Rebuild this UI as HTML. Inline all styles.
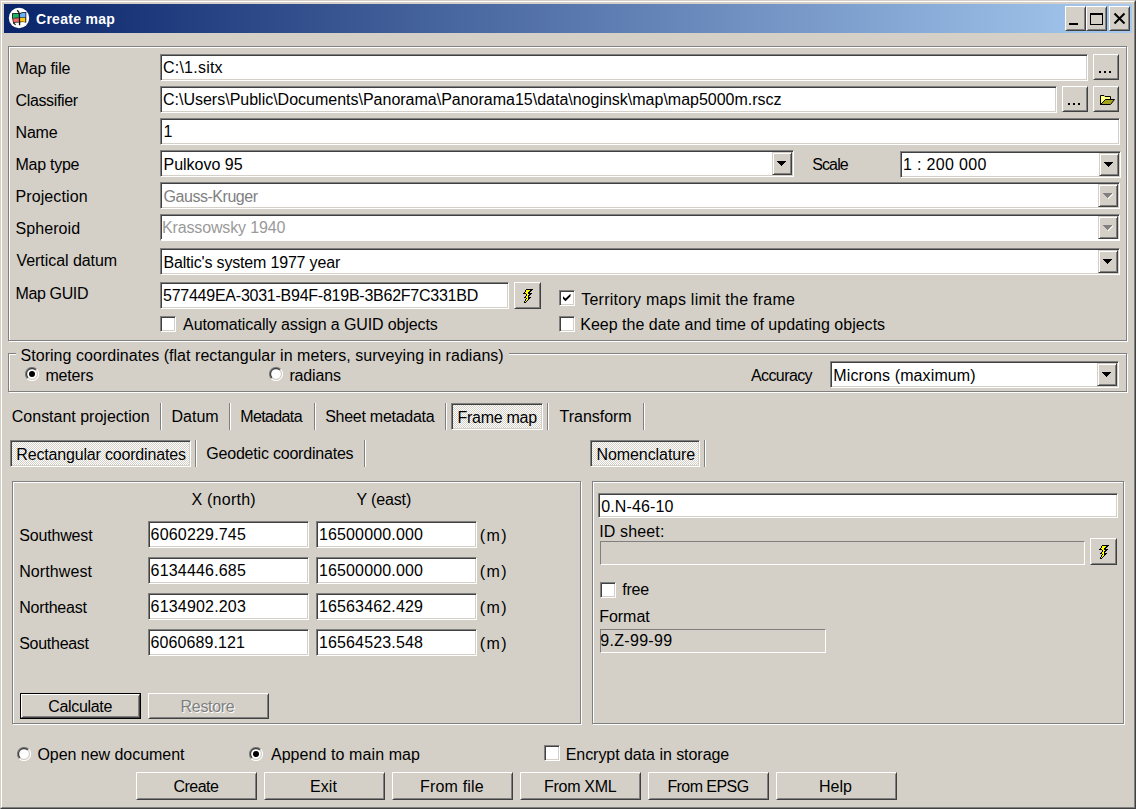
<!DOCTYPE html>
<html><head><meta charset="utf-8"><title>Create map</title>
<style>
html,body{margin:0;padding:0;width:1136px;height:809px;overflow:hidden;background:#d4d0c8}
body{position:relative;font-family:"Liberation Sans",sans-serif;font-size:16px;color:#000}
body>div,body>svg{position:absolute;box-sizing:border-box}
.t{white-space:pre;line-height:18px}
</style></head><body>
<div style="left:0px;top:0px;width:1136px;height:809px;border:1px solid;border-color:#d4d0c8 #404040 #404040 #d4d0c8"></div>
<div style="left:1px;top:1px;width:1134px;height:807px;border:1px solid;border-color:#fff #808080 #808080 #fff"></div>
<div style="left:4px;top:4px;width:1128px;height:29px;background:linear-gradient(to right,#0a246a,#a6caf0)"></div>
<svg style="left:8px;top:7px" width="22" height="22"><circle cx="11" cy="11" r="10.2" fill="#fff"/><path d="M4,6.3 Q8,5.6 11.2,6.3 Q14.5,4.6 18.3,5 L18.2,15.8 Q15,14.4 11.5,15.6 Q8,14.9 5.2,16.6 Q3.8,11 4,6.3 Z" fill="#111"/><path d="M4.9,7 Q8,6.4 11,7 L11,10.7 Q8,10.4 5,11 Z" fill="#1fb463"/><path d="M12,7 Q14.5,5.5 17.5,5.8 L17.5,10.4 Q14.5,10 12,10.5 Z" fill="#6ab0ff"/><path d="M5.1,11.6 Q8,11 11,11.3 L11,14.9 Q8,14.5 5.6,15.7 Z" fill="#f06a6a"/><path d="M12,11.1 Q14.5,10.7 17.3,11 L17.3,15 Q14.5,13.9 12,14.8 Z" fill="#ffc814"/><path d="M9.2,3.3 Q11.3,5 11.4,8 L11.6,18.2" stroke="#111" stroke-width="1.3" fill="none"/><path d="M5.2,15.6 L7.6,17.8" stroke="#111" stroke-width="1.1" fill="none"/></svg>
<div class="t" style="left:36.00px;top:10px;letter-spacing:0.278px;font-weight:bold;font-size:14px;color:#fff">Create map</div>
<div style="left:1065px;top:6px;width:21px;height:25px;background:#d4d0c8;border:1px solid;border-color:#fff #404040 #404040 #fff;box-shadow:inset 1px 1px #d4d0c8,inset -1px -1px #808080"></div>
<div style="left:1069px;top:23px;width:9px;height:2px;background:#000"></div>
<div style="left:1086px;top:6px;width:21px;height:25px;background:#d4d0c8;border:1px solid;border-color:#fff #404040 #404040 #fff;box-shadow:inset 1px 1px #d4d0c8,inset -1px -1px #808080"></div>
<div style="left:1090px;top:13px;width:13px;height:12px;border:1px solid #000;border-top-width:2px"></div>
<div style="left:1109px;top:6px;width:21px;height:25px;background:#d4d0c8;border:1px solid;border-color:#fff #404040 #404040 #fff;box-shadow:inset 1px 1px #d4d0c8,inset -1px -1px #808080"></div>
<svg style="left:1113px;top:12px" width="13" height="13"><path d="M1.5,1.5 L11.5,11.5 M11.5,1.5 L1.5,11.5" stroke="#000" stroke-width="2"/></svg>
<div style="left:9px;top:47px;width:1119px;height:295px;border:1px solid #fff"></div>
<div style="left:8px;top:46px;width:1119px;height:295px;border:1px solid #808080"></div>
<div class="t" style="left:15.50px;top:60px;letter-spacing:-0.157px;">Map file</div>
<div class="t" style="left:15.50px;top:92px;letter-spacing:-0.356px;">Classifier</div>
<div class="t" style="left:15.50px;top:124px;letter-spacing:-0.167px;">Name</div>
<div class="t" style="left:15.50px;top:156px;letter-spacing:-0.257px;">Map type</div>
<div class="t" style="left:15.50px;top:188px;letter-spacing:0.100px;">Projection</div>
<div class="t" style="left:15.50px;top:220px;letter-spacing:0.071px;">Spheroid</div>
<div class="t" style="left:16.50px;top:252px;letter-spacing:-0.054px;">Vertical datum</div>
<div class="t" style="left:15.50px;top:285px;letter-spacing:-0.371px;">Map GUID</div>
<div style="left:160px;top:54px;width:928px;height:27px;background:#fff;border:1px solid;border-color:#808080 #fff #fff #808080;box-shadow:inset 1px 1px #404040,inset -1px -1px #d4d0c8"></div>
<div class="t" style="left:163.00px;top:59px;letter-spacing:0.225px;">C:\1.sitx</div>
<div style="left:1093px;top:54px;width:26px;height:26px;background:#d4d0c8;border:1px solid;border-color:#fff #404040 #404040 #fff;box-shadow:inset 1px 1px #d4d0c8,inset -1px -1px #808080"></div>
<div style="left:1099px;top:71px;width:2px;height:2px;background:#000"></div>
<div style="left:1104px;top:71px;width:2px;height:2px;background:#000"></div>
<div style="left:1109px;top:71px;width:2px;height:2px;background:#000"></div>
<div style="left:160px;top:86px;width:897px;height:27px;background:#fff;border:1px solid;border-color:#808080 #fff #fff #808080;box-shadow:inset 1px 1px #404040,inset -1px -1px #d4d0c8"></div>
<div class="t" style="left:163.00px;top:91px;letter-spacing:-0.005px;">C:\Users\Public\Documents\Panorama\Panorama15\data\noginsk\map\map5000m.rscz</div>
<div style="left:1062px;top:86px;width:26px;height:26px;background:#d4d0c8;border:1px solid;border-color:#fff #404040 #404040 #fff;box-shadow:inset 1px 1px #d4d0c8,inset -1px -1px #808080"></div>
<div style="left:1068px;top:103px;width:2px;height:2px;background:#000"></div>
<div style="left:1073px;top:103px;width:2px;height:2px;background:#000"></div>
<div style="left:1078px;top:103px;width:2px;height:2px;background:#000"></div>
<div style="left:1093px;top:86px;width:26px;height:26px;background:#d4d0c8;border:1px solid;border-color:#fff #404040 #404040 #fff;box-shadow:inset 1px 1px #d4d0c8,inset -1px -1px #808080"></div>
<svg style="left:1096px;top:90px" width="22" height="18"><path d="M4.5,14.5 L4.5,5.5 L8,5.5 L9,6.5 L14.5,6.5 L14.5,9.5 L9.5,9.5 L4.5,14.5 Z" fill="#ffff80" stroke="#000" stroke-width="1"/><path d="M4.5,14.5 L9.5,9.5 L18.5,9.5 L14.5,14.5 Z" fill="#a4a41c" stroke="#000" stroke-width="1" stroke-linejoin="round"/></svg>
<div style="left:160px;top:118px;width:960px;height:27px;background:#fff;border:1px solid;border-color:#808080 #fff #fff #808080;box-shadow:inset 1px 1px #404040,inset -1px -1px #d4d0c8"></div>
<div class="t" style="left:163.50px;top:123px;letter-spacing:0.000px;">1</div>
<div style="left:160px;top:150px;width:634px;height:27px;background:#fff;border:1px solid;border-color:#808080 #fff #fff #808080;box-shadow:inset 1px 1px #404040,inset -1px -1px #d4d0c8"></div>
<div style="left:772px;top:152px;width:20px;height:23px;background:#d4d0c8;border:1px solid;border-color:#d4d0c8 #404040 #404040 #d4d0c8;box-shadow:inset 1px 1px #fff,inset -1px -1px #808080"></div>
<svg style="left:777px;top:161px" width="11" height="7" shape-rendering="crispEdges"><rect x="0" y="0" width="9" height="1" fill="#000"/><rect x="1" y="1" width="7" height="1" fill="#000"/><rect x="2" y="2" width="5" height="1" fill="#000"/><rect x="3" y="3" width="3" height="1" fill="#000"/><rect x="4" y="4" width="1" height="1" fill="#000"/></svg>
<div class="t" style="left:163.50px;top:156px;letter-spacing:-0.011px;">Pulkovo 95</div>
<div class="t" style="left:812.20px;top:156px;letter-spacing:-0.875px;">Scale</div>
<div style="left:900px;top:151px;width:221px;height:27px;background:#fff;border:1px solid;border-color:#808080 #fff #fff #808080;box-shadow:inset 1px 1px #404040,inset -1px -1px #d4d0c8"></div>
<div style="left:1099px;top:153px;width:20px;height:23px;background:#d4d0c8;border:1px solid;border-color:#d4d0c8 #404040 #404040 #d4d0c8;box-shadow:inset 1px 1px #fff,inset -1px -1px #808080"></div>
<svg style="left:1104px;top:162px" width="11" height="7" shape-rendering="crispEdges"><rect x="0" y="0" width="9" height="1" fill="#000"/><rect x="1" y="1" width="7" height="1" fill="#000"/><rect x="2" y="2" width="5" height="1" fill="#000"/><rect x="3" y="3" width="3" height="1" fill="#000"/><rect x="4" y="4" width="1" height="1" fill="#000"/></svg>
<div class="t" style="left:903.00px;top:156px;letter-spacing:0.330px;">1 : 200 000</div>
<div style="left:160px;top:182px;width:960px;height:27px;background:#fff;border:1px solid;border-color:#808080 #fff #fff #808080;box-shadow:inset 1px 1px #404040,inset -1px -1px #d4d0c8"></div>
<div style="left:1098px;top:184px;width:20px;height:23px;background:#d4d0c8;border:1px solid;border-color:#d4d0c8 #404040 #404040 #d4d0c8;box-shadow:inset 1px 1px #fff,inset -1px -1px #808080"></div>
<svg style="left:1103px;top:193px" width="11" height="7" shape-rendering="crispEdges"><rect x="9" y="1" width="1" height="1" fill="#fff"/><rect x="0" y="0" width="9" height="1" fill="#808080"/><rect x="8" y="2" width="1" height="1" fill="#fff"/><rect x="1" y="1" width="7" height="1" fill="#808080"/><rect x="7" y="3" width="1" height="1" fill="#fff"/><rect x="2" y="2" width="5" height="1" fill="#808080"/><rect x="6" y="4" width="1" height="1" fill="#fff"/><rect x="3" y="3" width="3" height="1" fill="#808080"/><rect x="5" y="5" width="1" height="1" fill="#fff"/><rect x="4" y="4" width="1" height="1" fill="#808080"/></svg>
<div class="t" style="left:163.50px;top:188px;letter-spacing:-0.455px;;color:#808080">Gauss-Kruger</div>
<div style="left:160px;top:214px;width:960px;height:27px;background:#fff;border:1px solid;border-color:#808080 #fff #fff #808080;box-shadow:inset 1px 1px #404040,inset -1px -1px #d4d0c8"></div>
<div style="left:161px;top:239px;width:958px;height:2px;background:#fff"></div>
<div style="left:1098px;top:216px;width:20px;height:23px;background:#d4d0c8;border:1px solid;border-color:#d4d0c8 #404040 #404040 #d4d0c8;box-shadow:inset 1px 1px #fff,inset -1px -1px #808080"></div>
<svg style="left:1103px;top:225px" width="11" height="7" shape-rendering="crispEdges"><rect x="9" y="1" width="1" height="1" fill="#fff"/><rect x="0" y="0" width="9" height="1" fill="#808080"/><rect x="8" y="2" width="1" height="1" fill="#fff"/><rect x="1" y="1" width="7" height="1" fill="#808080"/><rect x="7" y="3" width="1" height="1" fill="#fff"/><rect x="2" y="2" width="5" height="1" fill="#808080"/><rect x="6" y="4" width="1" height="1" fill="#fff"/><rect x="3" y="3" width="3" height="1" fill="#808080"/><rect x="5" y="5" width="1" height="1" fill="#fff"/><rect x="4" y="4" width="1" height="1" fill="#808080"/></svg>
<div class="t" style="left:162.00px;top:219px;letter-spacing:-0.143px;font-size:16px;transform:scaleY(1.0);color:#9a9a9a">Krassowsky 1940</div>
<div style="left:160px;top:248px;width:960px;height:27px;background:#fff;border:1px solid;border-color:#808080 #fff #fff #808080;box-shadow:inset 1px 1px #404040,inset -1px -1px #d4d0c8"></div>
<div style="left:1098px;top:250px;width:20px;height:23px;background:#d4d0c8;border:1px solid;border-color:#d4d0c8 #404040 #404040 #d4d0c8;box-shadow:inset 1px 1px #fff,inset -1px -1px #808080"></div>
<svg style="left:1103px;top:259px" width="11" height="7" shape-rendering="crispEdges"><rect x="0" y="0" width="9" height="1" fill="#000"/><rect x="1" y="1" width="7" height="1" fill="#000"/><rect x="2" y="2" width="5" height="1" fill="#000"/><rect x="3" y="3" width="3" height="1" fill="#000"/><rect x="4" y="4" width="1" height="1" fill="#000"/></svg>
<div class="t" style="left:163.50px;top:254px;letter-spacing:-0.175px;">Baltic's system 1977 year</div>
<div style="left:160px;top:282px;width:349px;height:27px;background:#fff;border:1px solid;border-color:#808080 #fff #fff #808080;box-shadow:inset 1px 1px #404040,inset -1px -1px #d4d0c8"></div>
<div class="t" style="left:163.00px;top:287px;letter-spacing:-0.243px;">577449EA-3031-B94F-819B-3B62F7C331BD</div>
<div style="left:514px;top:282px;width:27px;height:27px;background:#d4d0c8;border:1px solid;border-color:#fff #404040 #404040 #fff;box-shadow:inset 1px 1px #d4d0c8,inset -1px -1px #808080"></div>
<svg style="left:520px;top:287px" width="16" height="18" shape-rendering="crispEdges"><rect x="6" y="2" width="7" height="1" fill="#000"/><rect x="5" y="3" width="1" height="1" fill="#000"/><rect x="6" y="3" width="4" height="1" fill="#ffff00"/><rect x="10" y="3" width="2" height="1" fill="#000"/><rect x="5" y="4" width="1" height="1" fill="#000"/><rect x="6" y="4" width="3" height="1" fill="#ffff00"/><rect x="9" y="4" width="2" height="1" fill="#000"/><rect x="4" y="5" width="1" height="1" fill="#000"/><rect x="5" y="5" width="3" height="1" fill="#ffff00"/><rect x="8" y="5" width="2" height="1" fill="#000"/><rect x="3" y="6" width="3" height="1" fill="#000"/><rect x="6" y="6" width="2" height="1" fill="#ffff00"/><rect x="8" y="6" width="4" height="1" fill="#000"/><rect x="6" y="7" width="1" height="1" fill="#000"/><rect x="7" y="7" width="2" height="1" fill="#ffff00"/><rect x="9" y="7" width="2" height="1" fill="#000"/><rect x="6" y="8" width="1" height="1" fill="#000"/><rect x="7" y="8" width="1" height="1" fill="#ffff00"/><rect x="8" y="8" width="2" height="1" fill="#000"/><rect x="5" y="9" width="1" height="1" fill="#000"/><rect x="6" y="9" width="2" height="1" fill="#ffff00"/><rect x="8" y="9" width="1" height="1" fill="#000"/><rect x="4" y="10" width="2" height="1" fill="#000"/><rect x="6" y="10" width="2" height="1" fill="#ffff00"/><rect x="8" y="10" width="3" height="1" fill="#000"/><rect x="6" y="11" width="1" height="1" fill="#000"/><rect x="7" y="11" width="1" height="1" fill="#ffff00"/><rect x="8" y="11" width="2" height="1" fill="#000"/><rect x="5" y="12" width="1" height="1" fill="#000"/><rect x="6" y="12" width="2" height="1" fill="#ffff00"/><rect x="8" y="12" width="1" height="1" fill="#000"/><rect x="5" y="13" width="1" height="1" fill="#000"/><rect x="6" y="13" width="1" height="1" fill="#ffff00"/><rect x="7" y="13" width="1" height="1" fill="#000"/><rect x="4" y="14" width="1" height="1" fill="#000"/><rect x="5" y="14" width="1" height="1" fill="#ffff00"/><rect x="6" y="14" width="1" height="1" fill="#000"/><rect x="4" y="15" width="2" height="1" fill="#000"/></svg>
<div style="left:559px;top:290px;width:16px;height:16px;background:#fff;border:1px solid;border-color:#808080 #fff #fff #808080;box-shadow:inset 1px 1px #404040,inset -1px -1px #d4d0c8"></div>
<svg style="left:563px;top:294px" width="8" height="8"><path d="M0,2.2 L0,4.8 L2.5,7.2 L7.5,2.2 L7.5,-0.3 L2.5,4.6 Z" fill="#000"/></svg>
<div class="t" style="left:581.20px;top:291px;letter-spacing:0.259px;">Territory maps limit the frame</div>
<div style="left:160px;top:316px;width:16px;height:16px;background:#fff;border:1px solid;border-color:#808080 #fff #fff #808080;box-shadow:inset 1px 1px #404040,inset -1px -1px #d4d0c8"></div>
<div class="t" style="left:183.10px;top:316px;letter-spacing:-0.121px;">Automatically assign a GUID objects</div>
<div style="left:559px;top:316px;width:16px;height:16px;background:#fff;border:1px solid;border-color:#808080 #fff #fff #808080;box-shadow:inset 1px 1px #404040,inset -1px -1px #d4d0c8"></div>
<div class="t" style="left:580.20px;top:316px;letter-spacing:0.017px;">Keep the date and time of updating objects</div>
<div style="left:9px;top:354px;width:1119px;height:39px;border:1px solid #fff"></div>
<div style="left:8px;top:353px;width:1119px;height:39px;border:1px solid #808080"></div>
<div style="left:16px;top:350px;width:493px;height:8px;background:#d4d0c8"></div>
<div class="t" style="left:20.50px;top:347px;letter-spacing:0.043px;">Storing coordinates (flat rectangular in meters, surveying in radians)</div>
<svg style="left:25px;top:367px" width="14" height="14"><circle cx="7" cy="7" r="5.5" fill="#fff"/><path d="M2.4,11.6 A6.5,6.5 0 0 1 11.6,2.4" stroke="#808080" stroke-width="1.3" fill="none"/><path d="M3.1,10.9 A5.5,5.5 0 0 1 10.9,3.1" stroke="#404040" stroke-width="1.3" fill="none"/><path d="M11.6,2.4 A6.5,6.5 0 0 1 2.4,11.6" stroke="#fff" stroke-width="1.3" fill="none"/><path d="M10.9,3.1 A5.5,5.5 0 0 1 3.1,10.9" stroke="#d4d0c8" stroke-width="1.3" fill="none"/><circle cx="7" cy="7" r="3" fill="#000"/></svg>
<div class="t" style="left:45.40px;top:367px;letter-spacing:-0.180px;">meters</div>
<svg style="left:269px;top:367px" width="14" height="14"><circle cx="7" cy="7" r="5.5" fill="#fff"/><path d="M2.4,11.6 A6.5,6.5 0 0 1 11.6,2.4" stroke="#808080" stroke-width="1.3" fill="none"/><path d="M3.1,10.9 A5.5,5.5 0 0 1 10.9,3.1" stroke="#404040" stroke-width="1.3" fill="none"/><path d="M11.6,2.4 A6.5,6.5 0 0 1 2.4,11.6" stroke="#fff" stroke-width="1.3" fill="none"/><path d="M10.9,3.1 A5.5,5.5 0 0 1 3.1,10.9" stroke="#d4d0c8" stroke-width="1.3" fill="none"/></svg>
<div class="t" style="left:289.40px;top:367px;letter-spacing:-0.150px;">radians</div>
<div class="t" style="left:751.00px;top:367px;letter-spacing:-0.600px;">Accuracy</div>
<div style="left:830px;top:361px;width:289px;height:27px;background:#fff;border:1px solid;border-color:#808080 #fff #fff #808080;box-shadow:inset 1px 1px #404040,inset -1px -1px #d4d0c8"></div>
<div style="left:1097px;top:363px;width:20px;height:23px;background:#d4d0c8;border:1px solid;border-color:#d4d0c8 #404040 #404040 #d4d0c8;box-shadow:inset 1px 1px #fff,inset -1px -1px #808080"></div>
<svg style="left:1102px;top:372px" width="11" height="7" shape-rendering="crispEdges"><rect x="0" y="0" width="9" height="1" fill="#000"/><rect x="1" y="1" width="7" height="1" fill="#000"/><rect x="2" y="2" width="5" height="1" fill="#000"/><rect x="3" y="3" width="3" height="1" fill="#000"/><rect x="4" y="4" width="1" height="1" fill="#000"/></svg>
<div class="t" style="left:833.30px;top:367px;letter-spacing:0.119px;">Microns (maximum)</div>
<div class="t" style="left:11.80px;top:408px;letter-spacing:-0.006px;">Constant projection</div>
<div style="left:160px;top:403px;width:1px;height:27px;background:#808080"></div>
<div style="left:161px;top:403px;width:1px;height:27px;background:#fff"></div>
<div class="t" style="left:171.60px;top:408px;letter-spacing:-0.025px;">Datum</div>
<div style="left:229px;top:403px;width:1px;height:27px;background:#808080"></div>
<div style="left:230px;top:403px;width:1px;height:27px;background:#fff"></div>
<div class="t" style="left:240.20px;top:408px;letter-spacing:-0.614px;">Metadata</div>
<div style="left:314px;top:403px;width:1px;height:27px;background:#808080"></div>
<div style="left:315px;top:403px;width:1px;height:27px;background:#fff"></div>
<div class="t" style="left:325.20px;top:408px;letter-spacing:-0.269px;">Sheet metadata</div>
<div style="left:445px;top:403px;width:1px;height:27px;background:#808080"></div>
<div style="left:446px;top:403px;width:1px;height:27px;background:#fff"></div>
<div style="left:451px;top:403px;width:92px;height:27px;background:repeating-conic-gradient(#fff 0 25%,#d4d0c8 0 50%) 0 0/2px 2px;border:1px solid;border-color:#808080 #fff #fff #808080;box-shadow:inset 1px 1px #404040,inset -1px -1px #d4d0c8"></div>
<div class="t" style="left:457.50px;top:409px;letter-spacing:-0.275px;">Frame map</div>
<div style="left:547px;top:403px;width:1px;height:27px;background:#808080"></div>
<div style="left:548px;top:403px;width:1px;height:27px;background:#fff"></div>
<div class="t" style="left:559.60px;top:408px;letter-spacing:-0.025px;">Transform</div>
<div style="left:643px;top:403px;width:1px;height:27px;background:#808080"></div>
<div style="left:644px;top:403px;width:1px;height:27px;background:#fff"></div>
<div style="left:10px;top:440px;width:181px;height:27px;background:repeating-conic-gradient(#fff 0 25%,#d4d0c8 0 50%) 0 0/2px 2px;border:1px solid;border-color:#808080 #fff #fff #808080;box-shadow:inset 1px 1px #404040,inset -1px -1px #d4d0c8"></div>
<div class="t" style="left:16.30px;top:446px;letter-spacing:-0.173px;">Rectangular coordinates</div>
<div style="left:195px;top:440px;width:1px;height:27px;background:#808080"></div>
<div style="left:196px;top:440px;width:1px;height:27px;background:#fff"></div>
<div class="t" style="left:206.30px;top:445px;letter-spacing:-0.205px;">Geodetic coordinates</div>
<div style="left:364px;top:440px;width:1px;height:27px;background:#808080"></div>
<div style="left:365px;top:440px;width:1px;height:27px;background:#fff"></div>
<div style="left:590px;top:440px;width:110px;height:27px;background:repeating-conic-gradient(#fff 0 25%,#d4d0c8 0 50%) 0 0/2px 2px;border:1px solid;border-color:#808080 #fff #fff #808080;box-shadow:inset 1px 1px #404040,inset -1px -1px #d4d0c8"></div>
<div class="t" style="left:596.50px;top:446px;letter-spacing:-0.082px;">Nomenclature</div>
<div style="left:704px;top:440px;width:1px;height:27px;background:#808080"></div>
<div style="left:705px;top:440px;width:1px;height:27px;background:#fff"></div>
<div style="left:13px;top:482px;width:569px;height:243px;border:1px solid #fff"></div>
<div style="left:12px;top:481px;width:569px;height:243px;border:1px solid #808080"></div>
<div class="t" style="left:191.40px;top:491px;letter-spacing:0.250px;">X (north)</div>
<div class="t" style="left:356.60px;top:491px;letter-spacing:-0.157px;">Y (east)</div>
<div class="t" style="left:19.20px;top:527px;letter-spacing:-0.162px;">Southwest</div>
<div style="left:148px;top:521px;width:161px;height:27px;background:#fff;border:1px solid;border-color:#808080 #fff #fff #808080;box-shadow:inset 1px 1px #404040,inset -1px -1px #d4d0c8"></div>
<div class="t" style="left:150.60px;top:526px;letter-spacing:0.180px;">6060229.745</div>
<div style="left:316px;top:521px;width:161px;height:27px;background:#fff;border:1px solid;border-color:#808080 #fff #fff #808080;box-shadow:inset 1px 1px #404040,inset -1px -1px #d4d0c8"></div>
<div class="t" style="left:318.90px;top:526px;letter-spacing:0.155px;">16500000.000</div>
<div class="t" style="left:479.70px;top:527px;letter-spacing:1.500px;">(m)</div>
<div class="t" style="left:19.20px;top:563px;letter-spacing:0.100px;">Northwest</div>
<div style="left:148px;top:557px;width:161px;height:27px;background:#fff;border:1px solid;border-color:#808080 #fff #fff #808080;box-shadow:inset 1px 1px #404040,inset -1px -1px #d4d0c8"></div>
<div class="t" style="left:150.60px;top:562px;letter-spacing:0.180px;">6134446.685</div>
<div style="left:316px;top:557px;width:161px;height:27px;background:#fff;border:1px solid;border-color:#808080 #fff #fff #808080;box-shadow:inset 1px 1px #404040,inset -1px -1px #d4d0c8"></div>
<div class="t" style="left:318.90px;top:562px;letter-spacing:0.155px;">16500000.000</div>
<div class="t" style="left:479.70px;top:563px;letter-spacing:1.500px;">(m)</div>
<div class="t" style="left:19.20px;top:599px;letter-spacing:-0.188px;">Northeast</div>
<div style="left:148px;top:593px;width:161px;height:27px;background:#fff;border:1px solid;border-color:#808080 #fff #fff #808080;box-shadow:inset 1px 1px #404040,inset -1px -1px #d4d0c8"></div>
<div class="t" style="left:150.60px;top:598px;letter-spacing:0.180px;">6134902.203</div>
<div style="left:316px;top:593px;width:161px;height:27px;background:#fff;border:1px solid;border-color:#808080 #fff #fff #808080;box-shadow:inset 1px 1px #404040,inset -1px -1px #d4d0c8"></div>
<div class="t" style="left:318.90px;top:598px;letter-spacing:0.155px;">16563462.429</div>
<div class="t" style="left:479.70px;top:599px;letter-spacing:1.500px;">(m)</div>
<div class="t" style="left:19.20px;top:635px;letter-spacing:-0.275px;">Southeast</div>
<div style="left:148px;top:629px;width:161px;height:27px;background:#fff;border:1px solid;border-color:#808080 #fff #fff #808080;box-shadow:inset 1px 1px #404040,inset -1px -1px #d4d0c8"></div>
<div class="t" style="left:150.60px;top:634px;letter-spacing:0.090px;">6060689.121</div>
<div style="left:316px;top:629px;width:161px;height:27px;background:#fff;border:1px solid;border-color:#808080 #fff #fff #808080;box-shadow:inset 1px 1px #404040,inset -1px -1px #d4d0c8"></div>
<div class="t" style="left:318.90px;top:634px;letter-spacing:0.155px;">16564523.548</div>
<div class="t" style="left:479.70px;top:635px;letter-spacing:1.500px;">(m)</div>
<div style="left:20px;top:693px;width:121px;height:26px;border:1px solid #000"></div>
<div style="left:21px;top:694px;width:119px;height:24px;background:#d4d0c8;border:1px solid;border-color:#fff #404040 #404040 #fff;box-shadow:inset 1px 1px #d4d0c8,inset -1px -1px #808080"></div>
<div class="t" style="left:48.30px;top:698px;letter-spacing:-0.338px;">Calculate</div>
<div style="left:148px;top:693px;width:121px;height:26px;background:#d4d0c8;border:1px solid;border-color:#fff #404040 #404040 #fff;box-shadow:inset 1px 1px #d4d0c8,inset -1px -1px #808080"></div>
<div class="t" style="left:181.60px;top:699px;letter-spacing:-0.317px;;color:#fff">Restore</div><div class="t" style="left:180.60px;top:698px;letter-spacing:-0.317px;;color:#808080">Restore</div>
<div style="left:593px;top:482px;width:532px;height:243px;border:1px solid #fff"></div>
<div style="left:592px;top:481px;width:532px;height:243px;border:1px solid #808080"></div>
<div style="left:598px;top:493px;width:520px;height:25px;background:#fff;border:1px solid;border-color:#808080 #fff #fff #808080;box-shadow:inset 1px 1px #404040,inset -1px -1px #d4d0c8"></div>
<div class="t" style="left:601.30px;top:498px;letter-spacing:0.113px;">0.N-46-10</div>
<div class="t" style="left:599.30px;top:523px;letter-spacing:0.125px;">ID sheet:</div>
<div style="left:600px;top:541px;width:485px;height:24px;background:#d4d0c8;border:1px solid;border-color:#808080 #fff #fff #808080"></div>
<div style="left:1090px;top:538px;width:27px;height:27px;background:#d4d0c8;border:1px solid;border-color:#fff #404040 #404040 #fff;box-shadow:inset 1px 1px #d4d0c8,inset -1px -1px #808080"></div>
<svg style="left:1096px;top:543px" width="16" height="18" shape-rendering="crispEdges"><rect x="6" y="2" width="7" height="1" fill="#000"/><rect x="5" y="3" width="1" height="1" fill="#000"/><rect x="6" y="3" width="4" height="1" fill="#ffff00"/><rect x="10" y="3" width="2" height="1" fill="#000"/><rect x="5" y="4" width="1" height="1" fill="#000"/><rect x="6" y="4" width="3" height="1" fill="#ffff00"/><rect x="9" y="4" width="2" height="1" fill="#000"/><rect x="4" y="5" width="1" height="1" fill="#000"/><rect x="5" y="5" width="3" height="1" fill="#ffff00"/><rect x="8" y="5" width="2" height="1" fill="#000"/><rect x="3" y="6" width="3" height="1" fill="#000"/><rect x="6" y="6" width="2" height="1" fill="#ffff00"/><rect x="8" y="6" width="4" height="1" fill="#000"/><rect x="6" y="7" width="1" height="1" fill="#000"/><rect x="7" y="7" width="2" height="1" fill="#ffff00"/><rect x="9" y="7" width="2" height="1" fill="#000"/><rect x="6" y="8" width="1" height="1" fill="#000"/><rect x="7" y="8" width="1" height="1" fill="#ffff00"/><rect x="8" y="8" width="2" height="1" fill="#000"/><rect x="5" y="9" width="1" height="1" fill="#000"/><rect x="6" y="9" width="2" height="1" fill="#ffff00"/><rect x="8" y="9" width="1" height="1" fill="#000"/><rect x="4" y="10" width="2" height="1" fill="#000"/><rect x="6" y="10" width="2" height="1" fill="#ffff00"/><rect x="8" y="10" width="3" height="1" fill="#000"/><rect x="6" y="11" width="1" height="1" fill="#000"/><rect x="7" y="11" width="1" height="1" fill="#ffff00"/><rect x="8" y="11" width="2" height="1" fill="#000"/><rect x="5" y="12" width="1" height="1" fill="#000"/><rect x="6" y="12" width="2" height="1" fill="#ffff00"/><rect x="8" y="12" width="1" height="1" fill="#000"/><rect x="5" y="13" width="1" height="1" fill="#000"/><rect x="6" y="13" width="1" height="1" fill="#ffff00"/><rect x="7" y="13" width="1" height="1" fill="#000"/><rect x="4" y="14" width="1" height="1" fill="#000"/><rect x="5" y="14" width="1" height="1" fill="#ffff00"/><rect x="6" y="14" width="1" height="1" fill="#000"/><rect x="4" y="15" width="2" height="1" fill="#000"/></svg>
<div style="left:600px;top:582px;width:16px;height:16px;background:#fff;border:1px solid;border-color:#808080 #fff #fff #808080;box-shadow:inset 1px 1px #404040,inset -1px -1px #d4d0c8"></div>
<div class="t" style="left:622.30px;top:581px;letter-spacing:-0.233px;">free</div>
<div class="t" style="left:599.30px;top:608px;letter-spacing:-0.060px;">Format</div>
<div style="left:600px;top:629px;width:226px;height:24px;background:#d4d0c8;border:1px solid;border-color:#808080 #fff #fff #808080"></div>
<div class="t" style="left:600.30px;top:632px;letter-spacing:0.300px;">9.Z-99-99</div>
<svg style="left:16.5px;top:746.5px" width="14" height="14"><circle cx="7" cy="7" r="5.5" fill="#fff"/><path d="M2.4,11.6 A6.5,6.5 0 0 1 11.6,2.4" stroke="#808080" stroke-width="1.3" fill="none"/><path d="M3.1,10.9 A5.5,5.5 0 0 1 10.9,3.1" stroke="#404040" stroke-width="1.3" fill="none"/><path d="M11.6,2.4 A6.5,6.5 0 0 1 2.4,11.6" stroke="#fff" stroke-width="1.3" fill="none"/><path d="M10.9,3.1 A5.5,5.5 0 0 1 3.1,10.9" stroke="#d4d0c8" stroke-width="1.3" fill="none"/></svg>
<div class="t" style="left:37.40px;top:746px;letter-spacing:-0.031px;">Open new document</div>
<svg style="left:248.5px;top:746.5px" width="14" height="14"><circle cx="7" cy="7" r="5.5" fill="#fff"/><path d="M2.4,11.6 A6.5,6.5 0 0 1 11.6,2.4" stroke="#808080" stroke-width="1.3" fill="none"/><path d="M3.1,10.9 A5.5,5.5 0 0 1 10.9,3.1" stroke="#404040" stroke-width="1.3" fill="none"/><path d="M11.6,2.4 A6.5,6.5 0 0 1 2.4,11.6" stroke="#fff" stroke-width="1.3" fill="none"/><path d="M10.9,3.1 A5.5,5.5 0 0 1 3.1,10.9" stroke="#d4d0c8" stroke-width="1.3" fill="none"/><circle cx="7" cy="7" r="3" fill="#000"/></svg>
<div class="t" style="left:270.90px;top:746px;letter-spacing:0.082px;">Append to main map</div>
<div style="left:544px;top:745px;width:16px;height:16px;background:#fff;border:1px solid;border-color:#808080 #fff #fff #808080;box-shadow:inset 1px 1px #404040,inset -1px -1px #d4d0c8"></div>
<div class="t" style="left:565.70px;top:746px;letter-spacing:-0.045px;">Encrypt data in storage</div>
<div style="left:136px;top:772px;width:121px;height:28px;background:#d4d0c8;border:1px solid;border-color:#fff #404040 #404040 #fff;box-shadow:inset 1px 1px #d4d0c8,inset -1px -1px #808080"></div>
<div class="t" style="left:173.50px;top:778px;letter-spacing:-0.540px;">Create</div>
<div style="left:264px;top:772px;width:121px;height:28px;background:#d4d0c8;border:1px solid;border-color:#fff #404040 #404040 #fff;box-shadow:inset 1px 1px #d4d0c8,inset -1px -1px #808080"></div>
<div class="t" style="left:310.10px;top:778px;letter-spacing:0.033px;">Exit</div>
<div style="left:392px;top:772px;width:121px;height:28px;background:#d4d0c8;border:1px solid;border-color:#fff #404040 #404040 #fff;box-shadow:inset 1px 1px #d4d0c8,inset -1px -1px #808080"></div>
<div class="t" style="left:420.00px;top:778px;letter-spacing:0.188px;">From file</div>
<div style="left:520px;top:772px;width:121px;height:28px;background:#d4d0c8;border:1px solid;border-color:#fff #404040 #404040 #fff;box-shadow:inset 1px 1px #d4d0c8,inset -1px -1px #808080"></div>
<div class="t" style="left:544.00px;top:778px;letter-spacing:-0.286px;">From XML</div>
<div style="left:648px;top:772px;width:121px;height:28px;background:#d4d0c8;border:1px solid;border-color:#fff #404040 #404040 #fff;box-shadow:inset 1px 1px #d4d0c8,inset -1px -1px #808080"></div>
<div class="t" style="left:667.40px;top:778px;letter-spacing:-0.562px;">From EPSG</div>
<div style="left:776px;top:772px;width:121px;height:28px;background:#d4d0c8;border:1px solid;border-color:#fff #404040 #404040 #fff;box-shadow:inset 1px 1px #d4d0c8,inset -1px -1px #808080"></div>
<div class="t" style="left:818.90px;top:778px;letter-spacing:0.033px;">Help</div>
</body></html>
